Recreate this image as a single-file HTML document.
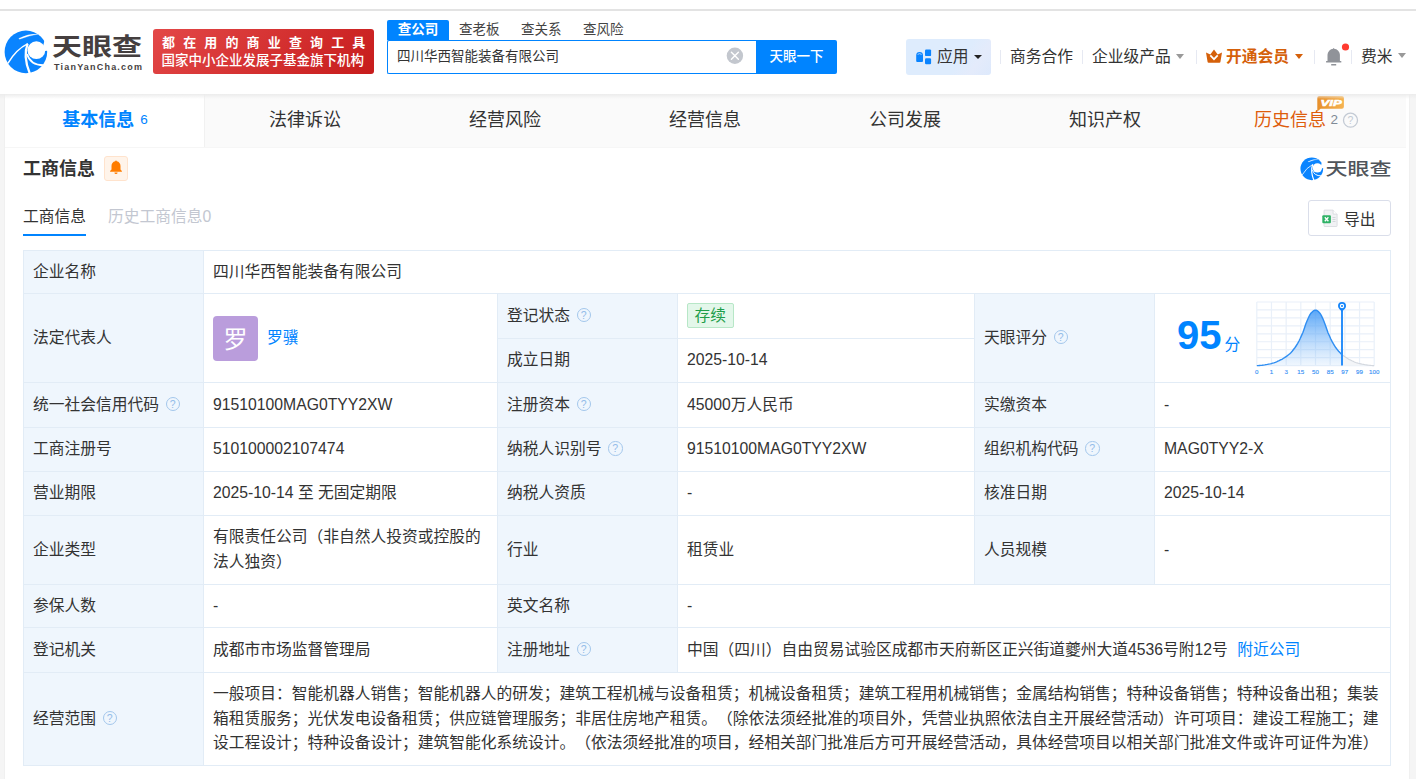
<!DOCTYPE html>
<html lang="zh-CN">
<head>
<meta charset="utf-8">
<title>四川华西智能装备有限公司 - 天眼查</title>
<style>
*{box-sizing:border-box;margin:0;padding:0}
html,body{width:1416px;height:779px;overflow:hidden;background:#f5f5f5}
body{font-family:"Liberation Sans","Noto Sans CJK SC",sans-serif;color:#333;font-size:15.75px;position:relative;text-spacing-trim:space-all}
.abs{position:absolute}
/* top */
#topwhite{left:0;top:0;width:1416px;height:94px;background:#fff}
#topline{left:0;top:9px;width:1416px;height:2px;background:#e3e3e3}
#hshadow{left:0;top:94px;width:1416px;height:5px;background:linear-gradient(#ececec,rgba(245,245,245,0));z-index:5}
/* logo */
#logotext{left:52px;top:27.5px;font-size:30px;font-weight:700;color:#453f3f;letter-spacing:0;line-height:36px;white-space:nowrap;transform:scaleY(0.81);transform-origin:0 22px}
#logosub{left:54px;top:61px;font-size:9px;font-weight:700;color:#453f3f;letter-spacing:1.2px;line-height:12px;white-space:nowrap}
#banner{left:153px;top:29px;width:221px;height:45px;border-radius:3px;background:linear-gradient(135deg,#e34848,#c71c1c);color:#fff;font-weight:700;white-space:nowrap;overflow:hidden}
#banner .l1{position:absolute;left:9px;top:5px;font-size:13px;line-height:18px;letter-spacing:8.15px}
#banner .l2{position:absolute;left:8.5px;top:23px;font-size:13.5px;line-height:18px;letter-spacing:0;font-weight:500}
/* search */
.stab{top:20px;height:20px;line-height:19px;font-size:13.5px;color:#444;white-space:nowrap}
#stab1{left:387px;width:62px;background:#0084ff;color:#fff;text-align:center;border-radius:2px 2px 0 0;font-weight:700}
#sbox{left:387px;top:40px;width:370px;height:34px;border:1px solid #0084ff;border-right:none;border-radius:2px 0 0 2px;background:#fff}
#stext{left:397px;top:47px;font-size:13.5px;line-height:20px;color:#333;white-space:nowrap}
#sclear{left:726px;top:48px;width:17px;height:17px;border-radius:50%;background:#c4c7cc}
#sbtn{left:756px;top:40px;width:81px;height:34px;background:#0084ff;color:#fff;font-size:13.5px;font-weight:500;line-height:33px;text-align:center;border-radius:0 2px 2px 0;white-space:nowrap}
/* nav */
.nav{top:46px;font-size:15.75px;line-height:22px;color:#333;white-space:nowrap}
.sep{top:50px;width:1px;height:14px;background:#e6e9f2}
.caret{width:0;height:0;border-left:4px solid transparent;border-right:4px solid transparent;border-top:5px solid #999}
/* tabs */
#tabbar{left:5px;top:94px;width:1401px;height:53px;background:#fafafa}
#content{left:5px;top:94px;width:1403.500px;height:685px;background:#fff}
.tab{top:94px;width:200px;height:53px;line-height:52px;text-align:center;font-size:18px;color:#333;white-space:nowrap}
#tab1{left:5px;width:199px;background:#fff;color:#0084ff;font-weight:700}
/* table */
table{position:absolute;left:23px;top:250px;width:1367px;border-collapse:collapse;table-layout:fixed;font-size:15.75px}
td{border:1px solid #e2ecf6;padding:0 9px;line-height:24.75px;color:#333;vertical-align:middle;background:#fff;white-space:nowrap;overflow:hidden}
td.k{background:#eff6fd;color:#333}
.q{display:inline-block;width:14.500px;height:14.500px;border:1.200px solid #a3c7ec;border-radius:50%;color:#93bce9;font-size:10.500px;line-height:12px;text-align:center;position:relative;top:-2px;margin-left:6.500px;font-family:"Liberation Sans",sans-serif}
.ava{display:inline-block;width:45px;height:45px;border-radius:4px;background:#ba9ddc;color:#fff;font-size:24px;line-height:47px;text-align:center;vertical-align:middle;margin-left:0;position:relative;top:0;overflow:hidden}
.nm{display:inline-block;vertical-align:middle;margin-left:9px}
.tag{display:inline-block;height:25.500px;line-height:23px;padding:0 6.500px;border:1px solid #b7e7c7;border-radius:2px;background:#e3f7ea;color:#1e9e4a;position:relative;top:-0.500px;left:0}
.score{font-size:40px;font-weight:700;color:#0084ff;line-height:44px;margin-left:13px;position:relative;top:-3px;font-family:"Liberation Sans",sans-serif}
.fen{color:#0084ff;margin-left:3px;position:relative;top:-2.500px}
a{color:#0084ff;text-decoration:none}
</style>
</head>
<body>
<div class="abs" id="topwhite"></div>
<div class="abs" id="topline"></div>
<div class="abs" id="content"></div>
<div class="abs" id="tabbar"></div>
<div class="abs" id="hshadow"></div>
<div class="abs" style="left:4px;top:94px;width:1px;height:685px;background:#f0f0f0"></div>
<div class="abs" style="left:1408.500px;top:94px;width:1px;height:685px;background:#f0f0f0"></div>
<div class="abs" style="left:5px;top:147px;width:1401px;height:1px;background:#f6f6f6"></div>
<div class="abs" style="left:204px;top:94px;width:1px;height:53px;background:#f1f1f1"></div>

<!-- LOGO -->
<svg width="0" height="0" style="position:absolute"><defs><symbol id="tyc" viewBox="0 0 899 779">
  <circle cx="388" cy="388" r="319" fill="#0a84ff"/>
  <circle cx="545" cy="362" r="133" fill="#fff"/>
  <path d="M636 342 L666 222 L740 222 L740 366 L670 374 Z" fill="#fff"/>
  <path d="M282 186 Q420 116 570 121 Q440 144 292 198 Z" fill="#fff" stroke="#fff" stroke-width="4"/>
  <path d="M118 560 Q240 350 418 264" fill="none" stroke="#fff" stroke-width="22"/>
  <path d="M446 712 Q340 450 414 268" fill="none" stroke="#fff" stroke-width="34"/>
  <path d="M405 420 Q455 590 655 588" fill="none" stroke="#fff" stroke-width="27"/>
</symbol></defs></svg>
<svg class="abs" id="logoicon" style="left:0;top:26px" width="60" height="52"><use href="#tyc"/></svg>
<div class="abs" id="logotext">天眼查</div>
<div class="abs" id="logosub">TianYanCha.com</div>
<div class="abs" id="banner"><span class="l1">都在用的商业查询工具</span><span class="l2">国家中小企业发展子基金旗下机构</span></div>

<!-- SEARCH -->
<div class="abs stab" id="stab1">查公司</div>
<div class="abs stab" style="left:459px">查老板</div>
<div class="abs stab" style="left:521px">查关系</div>
<div class="abs stab" style="left:583px">查风险</div>
<div class="abs" id="sbox"></div>
<div class="abs" id="stext">四川华西智能装备有限公司</div>
<svg class="abs" style="left:726px;top:47px" width="18" height="18" viewBox="0 0 18 18"><circle cx="8.9" cy="8.8" r="8.2" fill="#c3c7ce"/><path d="M5.4 5.3l7 7M12.4 5.3l-7 7" stroke="#fff" stroke-width="1.4" stroke-linecap="round"/></svg>
<div class="abs" id="sbtn">天眼一下</div>

<!-- NAV -->
<div class="abs" style="left:906px;top:39px;width:85px;height:36px;border-radius:3px;background:linear-gradient(125deg,#deecfd 0%,#deecfd 62%,#e4ebfb 80%,#dde9fc 100%)"></div>
<svg class="abs" style="left:914px;top:47px" width="20" height="20" viewBox="0 0 20 20"><path d="M2.2 8.3a3.4 3.4 0 0 1 6.8 0v5.6a1 1 0 0 1-1 1H3.2a1 1 0 0 1-1-1z" fill="#0a84ff"/><path d="M3.6 7.4q2-1.5 4 0" stroke="#cfe5ff" stroke-width=".8" fill="none"/><rect x="11" y="2.4" width="6.1" height="6.7" rx="1.2" fill="#0a84ff"/><rect x="11" y="11.2" width="6.1" height="6.1" rx="1.2" fill="#0a84ff"/></svg>
<div class="abs nav" style="left:937px">应用</div>
<div class="abs caret" style="left:974px;top:55px;border-top:4.5px solid #222"></div>
<div class="abs sep" style="left:1000px"></div>
<div class="abs nav" style="left:1010px">商务合作</div>
<div class="abs sep" style="left:1082px"></div>
<div class="abs nav" style="left:1092px">企业级产品</div>
<div class="abs caret" style="left:1176px;top:54px"></div>
<div class="abs sep" style="left:1196px"></div>
<svg class="abs" style="left:1205px;top:48px" width="18" height="16" viewBox="0 0 18 16"><path d="M1 4.6l4.3 2L9 1.4l3.7 5.2 4.3-2-1.6 9.3a1 1 0 0 1-1 .8H3.6a1 1 0 0 1-1-.8z" fill="#d5600a"/><path d="M5.300 7.300l3.700 3.900 3.700-3.900" stroke="#fff" stroke-width="1.700" fill="none"/></svg>
<div class="abs nav" style="left:1226px;color:#d5600a;font-weight:700">开通会员</div>
<div class="abs caret" style="left:1294.5px;top:54px;border-top-color:#d5600a"></div>
<div class="abs sep" style="left:1314px"></div>
<svg class="abs" style="left:1323px;top:42px" width="28" height="26" viewBox="0 0 28 26"><path d="M10.300 6.800V6.100h.8v.7a6 6 0 0 1 5.800 6V19h1.400v1.500H3.100V19h1.400v-6.200a6 6 0 0 1 5.800-6z" fill="#909399"/><rect x="8.2" y="22" width="5" height="1.5" fill="#909399"/><circle cx="22.5" cy="5" r="3.6" fill="#ff3b30"/></svg>
<div class="abs sep" style="left:1351px"></div>
<div class="abs nav" style="left:1361px">费米</div>
<div class="abs caret" style="left:1398px;top:53px"></div>

<!-- TABS -->
<div class="abs tab" id="tab1">基本信息 <span style="font-size:13.5px;font-weight:400;position:relative;top:-2px;left:1px">6</span></div>
<div class="abs tab" style="left:205px">法律诉讼</div>
<div class="abs tab" style="left:405px">经营风险</div>
<div class="abs tab" style="left:605px">经营信息</div>
<div class="abs tab" style="left:805px">公司发展</div>
<div class="abs tab" style="left:1005px">知识产权</div>
<div class="abs tab" style="left:1254px;width:auto;color:#de5d0c;text-align:left">历史信息</div>
<div class="abs" style="left:1330.500px;top:111px;font-size:13.5px;line-height:18px;color:#808a96">2</div>
<svg class="abs" style="left:1342px;top:112px" width="17" height="17" viewBox="0 0 17 17"><circle cx="8.5" cy="8.2" r="7" fill="none" stroke="#c3cad4" stroke-width="1.3"/><text x="8.5" y="12" font-size="10.5" text-anchor="middle" fill="#c3cad4" font-family="Liberation Sans,sans-serif">?</text></svg>
<svg class="abs" style="left:1316px;top:95px" width="30" height="18" viewBox="0 0 30 18"><defs><linearGradient id="vg" x1="0" y1="0" x2="1" y2="0"><stop offset="0" stop-color="#e78f2a"/><stop offset="1" stop-color="#f5b352"/></linearGradient></defs><path d="M3.2 1.1h22.7a2 2 0 0 1 2 2v8.7a2 2 0 0 1-2 2H4.6L1.3 16.6V3.1a2 2 0 0 1 1.9-2z" fill="url(#vg)"/><text x="4.6" y="11.3" font-size="9" font-weight="700" font-style="italic" fill="#fff" stroke="#fff" stroke-width=".55" font-family="Liberation Sans,sans-serif" textLength="21" lengthAdjust="spacingAndGlyphs">VIP</text></svg>

<!-- SECTION HEAD -->
<div class="abs" style="left:23px;top:156px;font-size:18px;font-weight:700;line-height:26px;color:#333;white-space:nowrap">工商信息</div>
<div class="abs" style="left:104px;top:156px;width:24px;height:25px;border:1px solid #ffe3cd;border-radius:3px;background:#fff4ea"></div>
<svg class="abs" style="left:108px;top:159px" width="16" height="17" viewBox="0 0 16 17"><path d="M8 1.6c.5 0 .8.3.8.7 2.300.5 3.700 2.400 3.700 4.800v3.300l1.400 1.700v.6H2.100v-.6l1.400-1.700V7.100c0-2.400 1.400-4.300 3.700-4.800 0-.4.300-.7.800-.7z" fill="#ff7d00"/><path d="M6.400 13.400h3.200a1.600 1.600 0 0 1-3.200 0z" fill="#ff7d00"/></svg>
<div class="abs" style="left:23px;top:206px;font-size:15.75px;line-height:22px;color:#333;white-space:nowrap">工商信息</div>
<div class="abs" style="left:23px;top:233.500px;width:63px;height:2.500px;background:#0084ff"></div>
<div class="abs" style="left:108px;top:206px;font-size:15.75px;line-height:22px;color:#c3c7d1;white-space:nowrap">历史工商信息0</div>
<div class="abs" style="left:1308px;top:200px;width:83px;height:36px;border:1px solid #dadeea;border-radius:3px;background:#fff"></div>
<svg class="abs" style="left:1298.200px;top:154.500px" width="32" height="27.700"><use href="#tyc"/></svg>
<div class="abs" style="left:1325.500px;top:153.500px;font-size:22px;font-weight:500;color:#50555b;line-height:30px;white-space:nowrap;transform:scaleY(0.78);transform-origin:0 17px">天眼查</div>
<svg class="abs" style="left:1321px;top:208px" width="19" height="20" viewBox="0 0 19 20"><path d="M3.600 2.100h8.500l4 4v11.800a.6.600 0 0 1-.6.600H3.600a.6.600 0 0 1-.6-.6V2.700a.6.600 0 0 1 .6-.6z" fill="#f1f2f4" stroke="#d5d8dd" stroke-width=".8"/><path d="M12.100 2.100v4h4" fill="#fff" stroke="#d5d8dd" stroke-width=".8"/><path d="M11.500 9.500h3M11.500 11.500h3M11.500 13.500h3" stroke="#cfd2d8" stroke-width=".9"/><rect x="1.300" y="7.300" width="8.600" height="8" rx="1" fill="#2fb266"/><path d="M3.800 9.300l3.600 4M7.400 9.300l-3.600 4" stroke="#fff" stroke-width="1.300"/></svg>
<div class="abs" style="left:1344px;top:208.500px;font-size:15.75px;line-height:22px;color:#333;white-space:nowrap">导出</div>

<!-- TABLE -->
<table>
<colgroup><col style="width:180px"><col style="width:294px"><col style="width:180px"><col style="width:297px"><col style="width:180px"><col style="width:236px"></colgroup>
<tr style="height:43px"><td class="k">企业名称</td><td colspan="5">四川华西智能装备有限公司</td></tr>
<tr style="height:45px"><td class="k" rowspan="2">法定代表人</td><td rowspan="2"><span class="ava">罗</span><a class="nm">罗骥</a></td><td class="k">登记状态<span class="q">?</span></td><td><span class="tag">存续</span></td><td class="k" rowspan="2">天眼评分<span class="q">?</span></td><td rowspan="2"><span class="score">95</span><span class="fen">分</span></td></tr>
<tr style="height:44px"><td class="k">成立日期</td><td>2025-10-14</td></tr>
<tr style="height:45px"><td class="k">统一社会信用代码<span class="q">?</span></td><td>91510100MAG0TYY2XW</td><td class="k">注册资本<span class="q">?</span></td><td>45000万人民币</td><td class="k">实缴资本</td><td>-</td></tr>
<tr style="height:44px"><td class="k">工商注册号</td><td>510100002107474</td><td class="k">纳税人识别号<span class="q">?</span></td><td>91510100MAG0TYY2XW</td><td class="k">组织机构代码<span class="q">?</span></td><td>MAG0TYY2-X</td></tr>
<tr style="height:44px"><td class="k">营业期限</td><td>2025-10-14 至 无固定期限</td><td class="k">纳税人资质</td><td>-</td><td class="k">核准日期</td><td>2025-10-14</td></tr>
<tr style="height:69px"><td class="k">企业类型</td><td style="white-space:normal">有限责任公司（非自然人投资或控股的法人独资）</td><td class="k">行业</td><td>租赁业</td><td class="k">人员规模</td><td>-</td></tr>
<tr style="height:43px"><td class="k">参保人数</td><td>-</td><td class="k">英文名称</td><td colspan="3">-</td></tr>
<tr style="height:45px"><td class="k">登记机关</td><td>成都市市场监督管理局</td><td class="k">注册地址<span class="q">?</span></td><td colspan="3">中国（四川）自由贸易试验区成都市天府新区正兴街道夔州大道4536号附12号 <a style="margin-left:5px">附近公司</a></td></tr>
<tr style="height:93px"><td class="k">经营范围<span class="q">?</span></td><td colspan="5" style="white-space:normal">一般项目：智能机器人销售；智能机器人的研发；建筑工程机械与设备租赁；机械设备租赁；建筑工程用机械销售；金属结构销售；特种设备销售；特种设备出租；集装箱租赁服务；光伏发电设备租赁；供应链管理服务；非居住房地产租赁。（除依法须经批准的项目外，凭营业执照依法自主开展经营活动）许可项目：建设工程施工；建设工程设计；特种设备设计；建筑智能化系统设计。（依法须经批准的项目，经相关部门批准后方可开展经营活动，具体经营项目以相关部门批准文件或许可证件为准）</td></tr>
</table>
<svg class="abs" style="left:1250px;top:298px" width="132" height="82" viewBox="0 0 132 82">
<defs><linearGradient id="cg" x1="0" y1="0" x2="0" y2="1"><stop offset="0" stop-color="#3d97f6" stop-opacity=".85"/><stop offset="1" stop-color="#7fbaf8" stop-opacity=".12"/></linearGradient></defs>
<path d="M6.80 4V67.6M21.47 4V67.6M36.15 4V67.6M50.83 4V67.6M65.50 4V67.6M80.17 4V67.6M94.85 4V67.6M109.53 4V67.6M124.20 4V67.6M6.8 4.00H124.2M6.8 11.95H124.2M6.8 19.90H124.2M6.8 27.85H124.2M6.8 35.80H124.2M6.8 43.75H124.2M6.8 51.70H124.2M6.8 59.65H124.2M6.8 67.60H124.2" stroke="#e9f0f9" stroke-width="1.200" fill="none"/>
<path d="M6.8 67.6 L8.1 67.6 L9.4 67.5 L10.8 67.4 L12.1 67.3 L13.4 67.1 L14.7 66.9 L16.0 66.6 L17.4 66.4 L18.7 66.1 L20.0 65.9 L21.3 65.6 L22.6 65.2 L23.9 64.8 L25.3 64.3 L26.6 63.8 L27.9 63.2 L29.2 62.6 L30.5 61.9 L31.9 61.3 L33.2 60.5 L34.5 59.7 L35.8 58.8 L37.1 57.9 L38.5 56.8 L39.8 55.7 L41.1 54.4 L42.4 53.0 L43.7 51.3 L45.1 49.5 L46.4 47.5 L47.7 45.4 L49.0 43.0 L50.3 40.3 L51.6 37.4 L53.0 34.2 L54.3 30.4 L55.6 26.6 L56.9 23.3 L58.2 20.2 L59.6 17.3 L60.9 15.2 L62.2 13.9 L63.5 12.8 L64.8 12.1 L66.2 12.2 L67.5 12.9 L68.8 14.1 L70.1 15.5 L71.4 17.7 L72.8 20.6 L74.1 23.7 L75.4 27.2 L76.7 31.0 L78.0 34.7 L79.4 37.8 L80.7 40.7 L82.0 43.4 L83.3 45.7 L84.6 47.8 L85.9 49.8 L87.3 51.6 L88.6 53.2 L89.9 54.6 L91.2 55.9 L92.0 56.6 L92.0 67.6 L6.8 67.6 Z" fill="url(#cg)"/>
<path d="M92.0 56.6 L92.5 57.0 L93.9 58.0 L95.2 59.0 L96.5 59.8 L97.8 60.6 L99.1 61.4 L100.5 62.0 L101.8 62.7 L103.1 63.3 L104.4 63.9 L105.7 64.4 L107.1 64.9 L108.4 65.3 L109.7 65.6 L111.0 65.9 L112.3 66.2 L113.6 66.4 L115.0 66.7 L116.3 66.9 L117.6 67.1 L118.9 67.3 L120.2 67.4 L121.6 67.5 L122.9 67.6 L124.2 67.6 L124.2 67.6 L92.0 67.6 Z" fill="#f3f5f8"/>
<path d="M92.0 56.6 L92.5 57.0 L93.9 58.0 L95.2 59.0 L96.5 59.8 L97.8 60.6 L99.1 61.4 L100.5 62.0 L101.8 62.7 L103.1 63.3 L104.4 63.9 L105.7 64.4 L107.1 64.9 L108.4 65.3 L109.7 65.6 L111.0 65.9 L112.3 66.2 L113.6 66.4 L115.0 66.7 L116.3 66.9 L117.6 67.1 L118.9 67.3 L120.2 67.4 L121.6 67.5 L122.9 67.6 L124.2 67.6" stroke="#d3d8df" stroke-width="1.1" fill="none"/>
<path d="M6.8 67.6 L8.1 67.6 L9.4 67.5 L10.8 67.4 L12.1 67.3 L13.4 67.1 L14.7 66.9 L16.0 66.6 L17.4 66.4 L18.7 66.1 L20.0 65.9 L21.3 65.6 L22.6 65.2 L23.9 64.8 L25.3 64.3 L26.6 63.8 L27.9 63.2 L29.2 62.6 L30.5 61.9 L31.9 61.3 L33.2 60.5 L34.5 59.7 L35.8 58.8 L37.1 57.9 L38.5 56.8 L39.8 55.7 L41.1 54.4 L42.4 53.0 L43.7 51.3 L45.1 49.5 L46.4 47.5 L47.7 45.4 L49.0 43.0 L50.3 40.3 L51.6 37.4 L53.0 34.2 L54.3 30.4 L55.6 26.6 L56.9 23.3 L58.2 20.2 L59.6 17.3 L60.9 15.2 L62.2 13.9 L63.5 12.8 L64.8 12.1 L66.2 12.2 L67.5 12.9 L68.8 14.1 L70.1 15.5 L71.4 17.7 L72.8 20.6 L74.1 23.7 L75.4 27.2 L76.7 31.0 L78.0 34.7 L79.4 37.8 L80.7 40.7 L82.0 43.4 L83.3 45.7 L84.6 47.8 L85.9 49.8 L87.3 51.6 L88.6 53.2 L89.9 54.6 L91.2 55.9 L92.0 56.6" stroke="#2f8ef2" stroke-width="1.4" fill="none"/>
<path d="M92.0 13V67.6" stroke="#2a8ffa" stroke-width="2"/>
<path d="M92 14c-1.300-2.200-4-3.400-4-6a4 4 0 0 1 8 0c0 2.600-2.700 3.800-4 6z" fill="#1585fa"/><circle cx="92" cy="8" r="2.200" fill="#fff"/><circle cx="92" cy="8" r="1.050" fill="#1585fa"/>
<g font-size="6.200" fill="#3a93f5" stroke="#3a93f5" stroke-width=".15" text-anchor="middle" font-family="Liberation Sans,sans-serif"><text x="6.8" y="75.8">0</text><text x="21.5" y="75.8">1</text><text x="36.2" y="75.8">3</text><text x="50.8" y="75.8">15</text><text x="65.5" y="75.8">50</text><text x="80.2" y="75.8">85</text><text x="94.8" y="75.8">97</text><text x="109.5" y="75.8">99</text><text x="124.2" y="75.8">100</text></g>
</svg>
</body>
</html>
